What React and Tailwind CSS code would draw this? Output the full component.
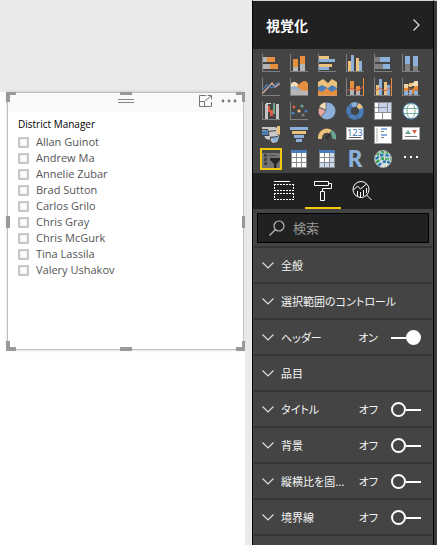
import React from 'react';

const managers = [
  'Allan Guinot',
  'Andrew Ma',
  'Annelie Zubar',
  'Brad Sutton',
  'Carlos Grilo',
  'Chris Gray',
  'Chris McGurk',
  'Tina Lassila',
  'Valery Ushakov',
];

const sections = [
  { label: '全般' },
  { label: '選択範囲のコントロール' },
  { label: 'ヘッダー', on: true },
  { label: '品目' },
  { label: 'タイトル', on: false },
  { label: '背景', on: false },
  { label: '縦横比を固...', on: false },
  { label: '境界線', on: false },
];

const O = '#e78f41';
const B = '#8cb0d9';
const D = '#4a7ebb';
const Y = '#ecc17c';
const G = '#b5b5b5';
const K = '#7f7f7f';
const N = '#6aa58f';
const R = '#dc5b43';

/* Each bar is [x, y, width, height, fill]. */
const Bars = ({ list }) =>
  list.map(([x, y, w, h, f], i) => <rect key={i} x={x} y={y} width={w} height={h} fill={f} />);

const Axis = () => <Bars list={[[0, 0, 1, 18, K], [0, 17, 18, 1, K]]} />;

const Table = ({ shaded }) => (
  <>
    <Bars list={[[1, 0, 16, 18, '#8a8a8a'], [1, 0, 16, 3, D]]} />
    {[3, 8, 13].map((y, r) =>
      [2, 7, 12].map((x, c) => (
        <rect key={`${x}-${y}`} x={x} y={y} width="4" height="4"
          fill={shaded && (c === 2 || r === 2) ? '#c9d9ee' : '#fff'} />
      ))
    )}
  </>
);

const visuals = [
  ['積み上げ横棒グラフ', <><Axis /><Bars list={[[1, 3, 4, 5, G], [5, 3, 8, 5, O], [1, 10, 7, 5, G], [8, 10, 8, 5, O]]} /></>],
  ['積み上げ縦棒グラフ', <><Axis /><Bars list={[[3, 5, 5, 8, O], [3, 13, 5, 4, G], [10, 2, 5, 8, O], [10, 10, 5, 7, G]]} /></>],
  ['集合横棒グラフ', <><Axis /><Bars list={[[1, 2, 10, 3, Y], [1, 5, 16, 3, B], [1, 10, 13, 3, Y], [1, 13, 10, 3, B]]} /></>],
  ['集合縦棒グラフ', <><Axis /><Bars list={[[2, 7, 3, 10, Y], [5, 1, 3, 16, B], [10, 4, 3, 13, Y], [13, 7, 3, 10, B]]} /></>],
  ['100% 積み上げ横棒グラフ', <><Axis /><Bars list={[[1, 3, 5, 5, K], [6, 3, 10, 5, B], [1, 10, 8, 5, K], [9, 10, 7, 5, B]]} /></>],
  ['100% 積み上げ縦棒グラフ', <><Axis /><Bars list={[[3, 2, 5, 8, B], [3, 10, 5, 7, K], [11, 2, 5, 10, B], [11, 12, 5, 5, K]]} /></>],

  ['折れ線グラフ', <><Axis /><path d="M1 15 10 5l3 4 5-3.500" fill="none" stroke="#dba8a0" strokeWidth="1.400" /><path d="m1 11 4-4 5 3 7-6" fill="none" stroke={D} strokeWidth="1.400" /></>],
  ['面グラフ', <><path d="M0 7c3-4 5-4 8-1l3 5v6H0z" fill="#f3dbb6" /><path d="M7 8c4-3 5-5 8-5 2 0 3 3 3 3v9H7z" fill={O} /><path d="m1 9 4-1 5 3 2 3H1z" fill={B} /><path d="M1 11c5-1 8 2 17 2v4H1z" fill={G} /><Axis /></>],
  ['積み上げ面グラフ', <><path d="m0 4 5-3 5 4 4-4 5 3v13H0z" fill="#ecc17c" /><path d="m0 9 4-2 6 3 4-3 5 3v7H0z" fill={D} /><path d="m0 12 4 2 5-4 4 4 6-3v6H0z" fill={O} /><rect x="0" y="17" width="19" height="1" fill="#d49a6a" /></>],
  ['折れ線および積み上げ縦棒グラフ', <><Axis /><Bars list={[[4, 3, 4, 9, O], [4, 12, 4, 5, G], [10, 8, 4, 5, O], [10, 13, 4, 4, G], [17, 0, 1, 18, O]]} /><path d="m1 13 5-3 5 3 6-4" fill="none" stroke={R} /></>],
  ['折れ線および集合縦棒グラフ', <><Axis /><Bars list={[[2, 7, 3, 10, Y], [5, 1, 3, 16, B], [10, 4, 3, 13, Y], [13, 7, 3, 10, B], [17, 0, 1, 18, O]]} /><path d="m1 13 5-3 5 3 6-4" fill="none" stroke={R} /></>],
  ['リボン グラフ', <><Axis /><path d="M2 7h4l4-2 6-2v5H2z" fill="#f1d5aa" /><path d="m2 10 5-1 5 4h4v4h-4l-5-4H2z" fill="#935a3c" /><path d="m2 14 5 1 4-5 5-1v4l-5 3H2z" fill={O} opacity=".85" /><Bars list={[[2, 6, 4, 4, '#f1d5aa'], [2, 10, 4, 3, O], [2, 13, 4, 4, B], [7, 5, 3, 4, Y], [7, 12, 3, 5, B], [12, 3, 4, 5, '#f3dbb6'], [12, 8, 4, 3, O], [12, 13, 4, 4, B]]} /></>],

  ['ウォーターフォール図', <><Axis /><Bars list={[[3, 2, 3, 15, '#c4c4c4'], [4, 1, 5, 1, '#ddd'], [6, 4, 2, 6, R], [8, 8, 3, 6, R], [11, 1, 2, 11, N], [14, 2, 3, 15, '#c4c4c4']]} /></>],
  ['散布図', <><Axis />{[[4, 5, R], [12, 4, N], [3, 11, D], [9, 9, Y], [16, 9, D], [13, 13, K]].map(([x, y, f]) => <circle key={`${x}-${y}`} cx={x} cy={y} r="1.600" fill={f} />)}</>],
  ['円グラフ', <><circle cx="9" cy="9" r="8.500" fill={B} /><path d="M8 8V0a8.500 8.500 0 0 0-7 5z" fill="#f3dbb6" stroke="#444" strokeWidth=".6" /><path d="M8 9 1 5.500A8.500 8.500 0 0 0 3 15z" fill="#e9a79c" stroke="#444" strokeWidth=".6" /></>],
  ['ドーナツ グラフ', <><circle cx="9" cy="9" r="6.500" fill="none" stroke={D} strokeWidth="4.500" strokeDasharray="7.600 .56" /><path d="M11.500 3a6.500 6.500 0 0 1 3.500 3.500" fill="none" stroke={Y} strokeWidth="4.500" /><path d="M6 3.300A6.500 6.500 0 0 1 10.500 2.700" fill="none" stroke={B} strokeWidth="4.500" /></>],
  ['ツリーマップ', <><Bars list={[[0, 0, 18, 18, '#8e8e8e'], [1, 1, 3, 4, '#fff'], [1, 6, 3, 4, '#fff'], [5, 1, 8, 4, '#c5d4ea'], [5, 6, 8, 4, '#c5d4ea'], [14, 1, 3, 9, '#c5d4ea'], [1, 11, 7, 6, '#fff'], [9, 11, 8, 6, '#fff']]} /></>],
  ['マップ', <><circle cx="9" cy="9" r="8" fill="#fff" stroke={D} /><g fill="none" stroke={N} strokeWidth=".9"><ellipse cx="9" cy="9" rx="4" ry="7.500" /><path d="M1.500 6.500h15M1.500 11.500h15" /></g></>],

  ['塗り分け地図', <><path d="M0 1h13l2 1v6l2 2-2 6-4 1-3-3-4-1-3-5z" fill="#c9c9c9" /><path d="m0 5 5-1 2 5H0z" fill={D} /><path d="M15 0h3v9l-3-1z" fill={Y} /><path d="m10 10 7 1-1 4-4 1-3-3z" fill={B} /><path d="M0 3.500h6m0 0 1 6H0m7-4 7-1m-6 7 8-1m-7 0-1 4" stroke="#444" fill="none" /></>],
  ['じょうご', <Bars list={[[0, 1, 18, 3, B], [2, 5, 14, 3, Y], [4, 9, 10, 3, B], [6, 13, 6, 3, B]]} />],
  ['ゲージ', <><g fill="none" strokeWidth="4"><path d="M2 13v-1a7 7 0 0 1 11-6" stroke={Y} /><path d="M12.500 5.500A7 7 0 0 1 16 13" stroke={N} /></g><path d="m8 11 6-6-4 8a1.500 1.500 0 0 1-2-2" fill="#303030" /></>],
  ['カード', <><rect x=".5" y="1.500" width="17" height="12" fill="#fff" stroke="#b0b0b0" /><text x="9" y="9.500" textAnchor="middle" fontSize="9" fontFamily="Noto Sans, sans-serif" fill="#376fb0">123</text><rect x="3" y="11" width="12" height="1" fill="#555" /></>],
  ['複数の行カード', <><rect x=".5" y=".5" width="17" height="17" fill="#fff" stroke="#999" /><Bars list={[[2, 2, 2, 14, '#d5d5d5'], [7, 2, 6, 2, B], [7, 5, 3, 1, K], [7, 8, 6, 2, B], [7, 11, 3, 1, K]]} /></>],
  ['KPI', <><rect x=".5" y="1.500" width="17" height="12" fill="#fff" stroke="#b0b0b0" /><path d="m3 8 3-4 3 4z" fill={N} /><path d="m10 4h5l-2.500 4z" fill={R} /><rect x="3" y="10" width="12" height="1" fill="#777" /></>],

  ['スライサー', <><Bars list={[[0, 0, 18, 18, '#747474'], [0, 0, 18, 3, '#454545'], [2, 4, 3, 3, '#444'], [2, 8, 3, 3, '#444'], [2, 12, 3, 3, '#444'], [7, 5, 7, 1, '#505050']]} /><path d="M8 8h10v2l-3.500 4v4H12v-4L8 10z" fill="#252525" /></>],
  ['テーブル', <Table />],
  ['マトリックス', <Table shaded />],
  ['R スクリプト ビジュアル', <text x="9" y="17" textAnchor="middle" fontSize="23" fontWeight="700" fontFamily="Noto Sans, Open Sans, sans-serif" fill={B}>R</text>],
  ['ArcGIS マップ', <><circle cx="9" cy="9" r="8.500" fill="#dfe3df" stroke="#a9a9a9" /><g fill="none" strokeWidth="2.500" strokeDasharray="4 1.200"><path d="m3 5 5-3 6 1" stroke="#2f9e4f" /><path d="m1.500 9 6-4 9 1" stroke="#2779b5" /><path d="m2 12.500 6-4 9 1" stroke="#2f9e4f" /><path d="m4 15.500 6-4 6 1" stroke="#2779b5" /></g><path d="M5 1q0 9 8 16M10 0q0 8 7 12" fill="none" stroke="#cfd5cf" /></>],
  ['その他', <Bars list={[[2, 6, 2, 2, '#fff'], [8, 6, 2, 2, '#fff'], [14, 6, 2, 2, '#fff']]} />],
];

const tabs = [
  ['フィールド', <g shapeRendering="crispEdges"><path d="M0 1.500h16" /><path d="M0 4.500h20M0 10.500h20M0 13.500h20M0 19.500h20" strokeDasharray="2 1" /><path d="M.5 4v7M19.500 4v7M.5 13v7M19.500 13v7" strokeDasharray="2 1" /></g>],
  ['書式', <path d="M1.500 1.500h14v4h-14zM15.500 3.500h3v5h-9v3M7.500 11.500h4v9h-4z" />],
  ['分析', <><circle cx="9" cy="9.500" r="8" /><path d="m14.500 15 5 5M1.500 10l4-4 3 3 6-5M5.500 11v5M8.500 12v5M11.500 10v6M14.500 8v5" /></>],
];

const handles = [
  'left-0 top-0 h-[10px] w-[10px] border-l-4 border-t-[3px]',
  'right-0 top-0 h-[10px] w-[9px] border-r-[3px] border-t-[3px]',
  'bottom-0 left-0 h-[10px] w-[10px] border-b-4 border-l-4',
  'bottom-0 right-0 h-[10px] w-[9px] border-b-4 border-r-[3px]',
  'left-1/2 top-0 w-3 -translate-x-1/2 border-t-[3px]',
  'bottom-0 left-1/2 w-3 -translate-x-1/2 border-b-4',
  'left-0 top-1/2 h-3 -translate-y-1/2 border-l-4',
  'right-0 top-1/2 h-3 -translate-y-1/2 border-r-[3px]',
];

function Slicer() {
  return (
    <section className="relative ml-[6px] h-[259px]">
      <div className="mx-px h-[258px] border border-[#c0c0c0] bg-white shadow-[0_0_3px_rgba(0,0,0,0.18)]">
        <header className="flex h-[19px] items-start justify-end bg-[#f9f9f9] pr-[5px]">
          <button type="button" aria-label="フォーカス モード" className="mr-2 mt-px text-[#777]">
            <svg className="block h-[14px] w-[15px]" viewBox="0 0 15 14" fill="none" stroke="currentColor">
              <path d="M8 1.500H1.500v11h12V8M1.500 7.500h5v5M7 7l6-5M9.500 1.500h4v4" />
            </svg>
          </button>
          <button type="button" aria-label="その他のオプション" className="mt-[6px] text-[#777]">
            <svg className="block h-[4px] w-[17px]" viewBox="0 0 17 4" fill="currentColor">
              <circle cx="2" cy="2" r="1.400" /><circle cx="8" cy="2" r="1.400" /><circle cx="14" cy="2" r="1.400" />
            </svg>
          </button>
        </header>
        <fieldset className="px-[10px]">
          <legend className="mb-[2px] pt-1 text-[10px] leading-4 text-black">District Manager</legend>
          {managers.map((name) => (
            <label key={name} className="flex h-4 items-center gap-[7px] text-[11px] leading-4 text-[#555]">
              <input type="checkbox" className="size-[11px] shrink-0 appearance-none border-2 border-[#c8c8c8] bg-white shadow-[inset_0_0_0_1px_#eeeeee]" />
              {name}
            </label>
          ))}
        </fieldset>
      </div>
      <div className="absolute left-1/2 top-[7px] h-1 w-4 -translate-x-1/2 border-y border-[#858585]" />
      {handles.map((h) => (
        <span key={h} className={`absolute border-[#999] ${h}`} />
      ))}
    </section>
  );
}

function Section({ label, on }) {
  const hasSwitch = on !== undefined;
  return (
    <li className="flex h-9 items-center border-b-2 border-[#343434] pl-2 pr-[11px]">
      <button type="button" className="flex min-w-0 flex-1 items-center gap-[7px] whitespace-nowrap text-left">
        <svg className="h-[7px] w-3 shrink-0" viewBox="0 0 12 7" fill="none" stroke="#ddd" strokeWidth="1.200">
          <path d="m.5.5 5.500 5.500L11.500.5" />
        </svg>
        {label}
      </button>
      {hasSwitch && (
        <label className="flex items-center gap-[13px]">
          {on ? 'オン' : 'オフ'}
          <input
            type="checkbox"
            role="switch"
            aria-label={label}
            defaultChecked={on}
            className="mt-px flex h-[15px] w-[30px] appearance-none items-center before:size-[15px] before:rounded-full before:border-2 before:border-white after:h-[2px] after:flex-1 after:bg-white checked:flex-row-reverse checked:before:bg-white"
          />
        </label>
      )}
    </li>
  );
}

export default function App() {
  return (
    <div className="flex h-screen overflow-hidden bg-[#eaeaea] font-['Open_Sans','Noto_Sans_CJK_JP',sans-serif]">
      <main className="flex min-w-0 flex-1 flex-col pr-[7px] pt-[92px]">
        <div className="flex-1 bg-white">
          <Slicer />
        </div>
      </main>

      <aside className="flex w-[182px] shrink-0 flex-col border-x border-t border-x-black border-t-[#d5d9d5] bg-[#444] font-['Noto_Sans_CJK_JP',sans-serif] text-[11px] leading-4 text-[#f5f5f5] [font-feature-settings:'palt']">
        <header className="flex h-12 shrink-0 items-center justify-between bg-[#212121] pl-[13px] pr-[13px]">
          <h2 className="text-[14px] font-bold leading-5 text-white">視覚化</h2>
          <button type="button" aria-label="折りたたむ">
            <svg className="block h-3 w-[7px]" viewBox="0 0 7 12" fill="none" stroke="#ddd" strokeWidth="1.200">
              <path d="M.5.5 6 6 .5 11.500" />
            </svg>
          </button>
        </header>

        <div className="grid shrink-0 grid-cols-[repeat(6,28px)] pb-[2px] pl-1 pt-[2px]">
          {visuals.map(([name, art]) => (
            <button key={name} type="button" aria-label={name} className="flex h-6 items-center justify-center">
              <span className={name === 'スライサー' ? 'border-2 border-[#f2c811] bg-[#fff3b0]' : ''}>
                <svg className="block size-[18px] overflow-visible" viewBox="0 0 18 18">{art}</svg>
              </span>
            </button>
          ))}
        </div>

        <nav className="flex h-9 shrink-0 gap-[3px] bg-[#212121] pl-[13px]">
          {tabs.map(([name, art]) => (
            <button
              key={name}
              type="button"
              aria-label={name}
              className={`flex w-9 justify-center border-b-2 pt-[7px] ${name === '書式' ? 'border-[#f2c811]' : 'border-transparent'}`}
            >
              <svg className="h-[21px] w-5 overflow-visible" viewBox="0 0 20 21" fill="none" stroke="#fff">{art}</svg>
            </button>
          ))}
        </nav>

        <label className="mx-1 mt-1 flex h-[30px] shrink-0 items-center gap-2 border border-black bg-[#212121] pl-[11px]">
          <svg className="size-4 shrink-0" viewBox="0 0 16 16" fill="none" stroke="#bbb" strokeWidth="1.200">
            <circle cx="10" cy="6" r="5" /><path d="M6.500 9.500.5 15.500" />
          </svg>
          <input type="search" aria-label="検索" placeholder="検索" className="min-w-0 flex-1 bg-transparent text-[13px] leading-5 outline-none placeholder:text-[#999]" />
        </label>

        <ul className="mx-px mt-[3px] border-t-2 border-[#343434]">
          {sections.map((s) => (
            <Section key={s.label} {...s} />
          ))}
        </ul>
      </aside>
      <div className="w-[3px] shrink-0 border-t border-[#d5d9d5] bg-[#3c3c3c]" />
    </div>
  );
}
